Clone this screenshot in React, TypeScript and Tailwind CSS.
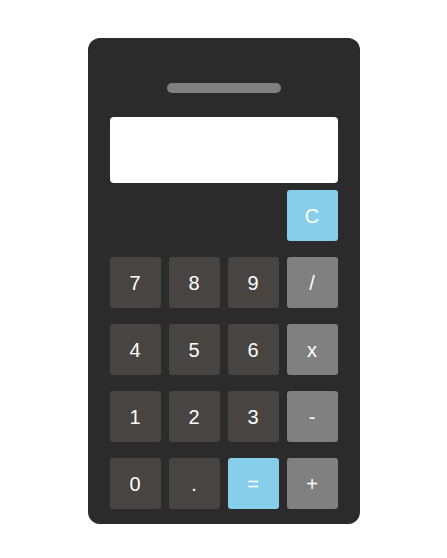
import React, { useState } from 'react';

const rows = [
  ['7', '8', '9', '/'],
  ['4', '5', '6', 'x'],
  ['1', '2', '3', '-'],
  ['0', '.', '=', '+'],
];

function keyClass(k: string) {
  if (k === '=') return 'bg-[#87ceeb]';
  if (['/', 'x', '-', '+'].includes(k)) return 'bg-[#808080]';
  return 'bg-[#484442]';
}

export default function App() {
  const [display, setDisplay] = useState('');

  const press = (k: string) => {
    if (k === '=') {
      try {
        // quick and dirty evaluation
        const res = Function(`return (${display.replace(/x/g, '*')})`)();
        setDisplay(String(res));
      } catch {
        setDisplay('Error');
      }
      return;
    }
    setDisplay(display + k);
  };

  return (
    <div className="min-h-[558px] w-full bg-white flex justify-center pt-[38px] font-['Liberation_Sans',Arial,sans-serif]">
      <div className="w-[272px] h-[486px] bg-[#2b2b2b] rounded-[12px] px-[22px] pt-[45px] pb-[15px] flex flex-col">
        <div className="mx-auto w-[114px] h-[10px] rounded-full bg-[#808080]" />
        <div className="mt-[24px] h-[66px] bg-white rounded-[4px] flex items-center justify-end px-3 text-2xl text-[#2b2b2b]">
          {display}
        </div>
        <div className="mt-[7px] flex justify-end">
          <button
            onClick={() => setDisplay('')}
            className="w-[51px] h-[51px] rounded-[3px] bg-[#87ceeb] text-white text-[20px]"
          >
            C
          </button>
        </div>
        <div className="mt-[16px] grid grid-cols-4 gap-x-[8px] gap-y-[16px]">
          {rows.flat().map((k) => (
            <button
              key={k}
              onClick={() => press(k)}
              className={`w-[51px] h-[51px] rounded-[3px] text-white text-[20px] ${keyClass(k)}`}
            >
              {k}
            </button>
          ))}
        </div>
      </div>
    </div>
  );
}
